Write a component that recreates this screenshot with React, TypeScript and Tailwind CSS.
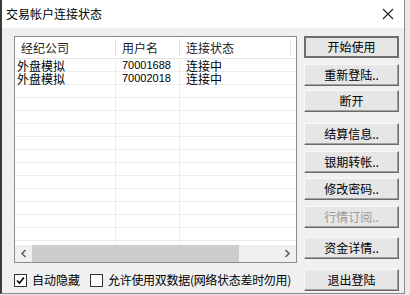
import React from "react";

const rows = [
  { broker: "外盘模拟", user: "70001688", status: "连接中" },
  { broker: "外盘模拟", user: "70002018", status: "连接中" },
];

const buttons = [
  { label: "开始使用", mt: "mt-0", primary: true },
  { label: "重新登陆..", mt: "mt-[6px]" },
  { label: "断开", mt: "mt-[4px]" },
  { label: "结算信息..", mt: "mt-[11px]" },
  { label: "银期转帐..", mt: "mt-[6px]" },
  { label: "修改密码..", mt: "mt-[5px]" },
  { label: "行情订阅..", mt: "mt-[6px]", disabled: true },
  { label: "资金详情..", mt: "mt-[9px]" },
  { label: "退出登陆", mt: "mt-[10px]" },
];

const Check = ({ checked }: { checked?: boolean }) => (
  <span className="w-[13px] h-[13px] border border-[#333333] bg-white flex items-center justify-center">
    {checked && (
      <svg width="9" height="9" viewBox="0 0 9 9">
        <path d="M1 4.5 L3.5 7 L8 1.5" fill="none" stroke="#000" strokeWidth="1.6" />
      </svg>
    )}
  </span>
);

export default function App() {
  return (
    <div
      className="w-[410px] h-[295px] bg-[#e9e9e9] overflow-hidden text-[12px] text-black"
      style={{ fontFamily: '"Noto Sans CJK SC", "Liberation Sans", sans-serif' }}
    >
      <div className="w-[405px] h-[294px] bg-[#f0f0f0] border-r border-b border-[#8a8a8a] border-l-2 border-l-[#3a3a3a]">
        {/* title bar */}
        <div className="h-[28px] bg-white flex items-center justify-between pl-[4px] pr-[10px]">
          <span className="text-[12px] leading-none">交易帐户连接状态</span>
          <svg width="12" height="12" viewBox="0 0 12 12">
            <path d="M1 1 L11 11 M11 1 L1 11" stroke="#222" strokeWidth="1.1" />
          </svg>
        </div>

        <div className="flex pl-[12px] pt-[8px]">
          {/* left column */}
          <div className="w-[283px]">
            <div className="h-[227px] border border-[#8c8c8c] bg-white flex flex-col overflow-hidden">
              {/* header */}
              <div className="h-[22px] flex items-center border-b border-[#e5e5e5] text-[#222]">
                <div className="w-[101px] pl-[6px] border-r border-[#e0e0e0] h-[17px] flex items-center">经纪公司</div>
                <div className="w-[64px] pl-[6px] border-r border-[#e0e0e0] h-[17px] flex items-center">用户名</div>
                <div className="w-[111px] pl-[6px] border-r border-[#e0e0e0] h-[17px] flex items-center">连接状态</div>
              </div>
              {/* rows */}
              <div className="flex-1 overflow-hidden">
                {Array.from({ length: 15 }).map((_, i) => {
                  const r = rows[i];
                  return (
                    <div key={i} className="h-[13px] flex leading-[13px] shadow-[inset_0_-1px_0_#ececec]">
                      <div className="w-[101px] pl-[2px] shadow-[inset_-1px_0_0_#ececec]">{r?.broker}</div>
                      <div
                        className="w-[64px] pl-[6px] shadow-[inset_-1px_0_0_#ececec] text-[11px]"
                        style={{ fontFamily: '"Liberation Sans", sans-serif' }}
                      >
                        {r?.user}
                      </div>
                      <div className="w-[111px] pl-[6px]">{r?.status}</div>
                    </div>
                  );
                })}
              </div>
              {/* horizontal scrollbar */}
              <div className="h-[17px] bg-[#f0f0f0] flex items-center">
                <div className="w-[17px] flex justify-center">
                  <svg width="7" height="9" viewBox="0 0 7 9">
                    <path d="M5.5 1 L2 4.5 L5.5 8" fill="none" stroke="#606060" strokeWidth="1.6" />
                  </svg>
                </div>
                <div className="w-[207px] h-[17px] bg-[#cdcdcd]" />
                <div className="flex-1" />
                <div className="w-[17px] flex justify-center">
                  <svg width="7" height="9" viewBox="0 0 7 9">
                    <path d="M1.5 1 L5 4.5 L1.5 8" fill="none" stroke="#606060" strokeWidth="1.6" />
                  </svg>
                </div>
              </div>
            </div>
            {/* checkboxes */}
            <div className="flex items-center mt-[10px] h-[14px]">
              <Check checked />
              <span className="ml-[5px]">自动隐藏</span>
              <span className="ml-[10px]">
                <Check />
              </span>
              <span className="ml-[5px] tracking-[-0.3px]">允许使用双数据(网络状态差时勿用)</span>
            </div>
          </div>

          {/* right column */}
          <div className="ml-[7px] w-[95px] flex flex-col">
            {buttons.map((b) => (
              <div
                key={b.label}
                className={`${b.mt} h-[22px] flex items-center justify-center bg-[#e6e6e6] ${
                  b.primary
                    ? "border-2 border-[#6e6e6e]"
                    : "border border-t-[#f8f8f8] border-l-[#f8f8f8] border-r-[#6a6a6a] border-b-[#6a6a6a] shadow-[inset_-1px_-1px_0_#a0a0a0]"
                } ${b.disabled ? "text-[#9a9a9a]" : "text-black"}`}
              >
                {b.label}
              </div>
            ))}
          </div>
        </div>
      </div>
    </div>
  );
}
